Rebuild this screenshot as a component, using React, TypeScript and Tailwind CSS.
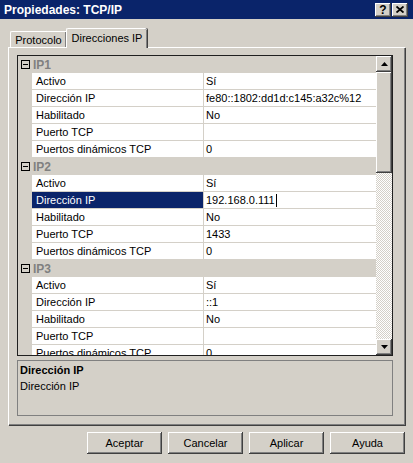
import React from 'react'

const RAISED =
  'shadow-[inset_-1px_-1px_#404040,inset_1px_1px_#ffffff,inset_-2px_-2px_#808080,inset_2px_2px_#d4d0c8]'

type Row = [string, string]

const GROUPS: { name: string; rows: Row[] }[] = [
  {
    name: 'IP1',
    rows: [
      ['Activo', 'Sí'],
      ['Dirección IP', 'fe80::1802:dd1d:c145:a32c%12'],
      ['Habilitado', 'No'],
      ['Puerto TCP', ''],
      ['Puertos dinámicos TCP', '0'],
    ],
  },
  {
    name: 'IP2',
    rows: [
      ['Activo', 'Sí'],
      ['Dirección IP', '192.168.0.111'],
      ['Habilitado', 'No'],
      ['Puerto TCP', '1433'],
      ['Puertos dinámicos TCP', '0'],
    ],
  },
  {
    name: 'IP3',
    rows: [
      ['Activo', 'Sí'],
      ['Dirección IP', '::1'],
      ['Habilitado', 'No'],
      ['Puerto TCP', ''],
      ['Puertos dinámicos TCP', '0'],
    ],
  },
]

function Arrow({ down }: { down?: boolean }) {
  return (
    <svg width="7" height="4" viewBox="0 0 7 4" aria-hidden="true">
      <path d={down ? 'M0 0H7L3.5 4Z' : 'M3.5 0L7 4H0Z'} fill="#000" />
    </svg>
  )
}

function MinusBox() {
  return (
    <div className="ml-[3px] flex h-[9px] w-[9px] items-center justify-center border border-[#000]">
      <div className="h-px w-[5px] bg-black" />
    </div>
  )
}

function PropertyGrid() {
  return (
    <div className="flex h-[301px] w-[376px] border border-[#202020] bg-[#d4d0c8]">
      <div className="flex-1 overflow-hidden">
        {GROUPS.map((g) => (
          <div key={g.name}>
            {/* category */}
            <div className="flex h-[17px] items-center">
              <div className="flex w-[14px] items-center">
                <MinusBox />
              </div>
              <span className="pl-[1px] text-[12px] font-bold text-[#808080]">{g.name}</span>
            </div>
            {g.rows.map(([label, value]) => {
              const selected = g.name === 'IP2' && label === 'Dirección IP'
              return (
                <div key={label} className="flex h-[17px]">
                  <div className="w-[14px]" />
                  <div
                    className={`flex w-[172px] items-center border-r border-b border-[#d4d0c8] pl-[4px] ${
                      selected ? 'bg-[#0a246a] text-white' : 'bg-white'
                    }`}
                  >
                    {label}
                  </div>
                  <div className="flex flex-1 items-center border-b border-[#d4d0c8] bg-white pl-[2px] whitespace-nowrap">
                    {value}
                    {selected && <span className="ml-px inline-block h-[13px] w-px bg-black" />}
                  </div>
                </div>
              )
            })}
          </div>
        ))}
      </div>

      {/* scrollbar */}
      <div className="flex w-[16px] flex-col bg-[repeating-conic-gradient(#ffffff_0_25%,#d4d0c8_0_50%)] bg-[length:2px_2px]">
        <div className={`flex h-[16px] items-center justify-center bg-[#d4d0c8] ${RAISED}`}>
          <Arrow />
        </div>
        <div className={`h-[101px] bg-[#d4d0c8] ${RAISED}`} />
        <div className="flex-1" />
        <div className={`flex h-[16px] items-center justify-center bg-[#d4d0c8] ${RAISED}`}>
          <Arrow down />
        </div>
      </div>
    </div>
  )
}

export default function App() {
  return (
    <div className="h-[463px] w-[413px] overflow-hidden bg-[#d4d0c8] font-[family-name:'Liberation_Sans',Arial,sans-serif] text-[11px] leading-none text-black">
      {/* title bar */}
      <div className="flex h-[19px] items-center justify-between bg-[#0a246a] pr-[5px] pl-[4px]">
        <span className="text-[12px] font-bold text-white">Propiedades: TCP/IP</span>
        <div className="flex gap-[1px]">
          <div className={`flex h-[14px] w-[16px] items-center justify-center bg-[#d4d0c8] text-[12px] font-bold ${RAISED}`}>
            ?
          </div>
          <div className={`flex h-[14px] w-[16px] items-center justify-center bg-[#d4d0c8] ${RAISED}`}>
            <svg width="8" height="7" viewBox="0 0 8 7" aria-hidden="true">
              <path d="M0.5 0.5L7.5 6.5M7.5 0.5L0.5 6.5" stroke="#000" strokeWidth="1.8" />
            </svg>
          </div>
        </div>
      </div>

      <div className="px-[8px] pt-[9px]">
        {/* tabs */}
        <div className="flex h-[19px] items-end pl-[2px]">
          <div className="flex h-[16px] w-[56px] items-center justify-center rounded-tl-[2px] border-t border-l border-white pt-[1px] shadow-[inset_-1px_0_#808080]">
            Protocolo
          </div>
          <div className="relative z-10 -mb-px flex h-[20px] w-[81px] items-start justify-center rounded-t-[2px] border-t border-l border-white bg-[#d4d0c8] pt-[4px] shadow-[inset_-1px_0_#808080,1px_0_#404040]">
            Direcciones IP
          </div>
        </div>

        {/* tab panel */}
        <div className="flex h-[378px] w-[397px] flex-col gap-[4px] border-t border-l border-white px-[8px] pt-[7px] shadow-[inset_-1px_-1px_#808080,1px_1px_#404040]">
          <PropertyGrid />
          <div className="h-[56px] w-[376px] border border-[#808080] pt-[4px] pl-[2px]">
            <div className="font-bold">Dirección IP</div>
            <div className="mt-[5px]">Dirección IP</div>
          </div>
        </div>

        {/* buttons */}
        <div className="mt-[7px] flex justify-end gap-[6px]">
          {['Aceptar', 'Cancelar', 'Aplicar', 'Ayuda'].map((b) => (
            <div key={b} className={`flex h-[22px] w-[75px] items-center justify-center bg-[#d4d0c8] ${RAISED}`}>
              {b}
            </div>
          ))}
        </div>
      </div>
    </div>
  )
}
